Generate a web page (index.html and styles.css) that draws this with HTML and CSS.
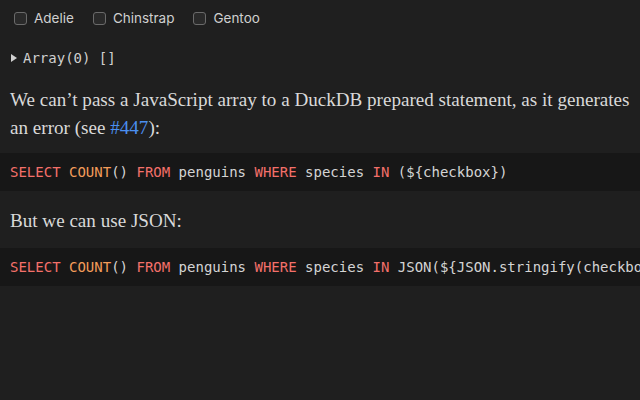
FILE: index.html
```html
<!DOCTYPE html>
<html>
<head>
<meta charset="utf-8">
<link rel="stylesheet" href="styles.css">
</head>
<body>
<main class="page">
  <form class="inputs">
    <label class="opt"><span class="box"></span>Adelie</label>
    <label class="opt"><span class="box"></span>Chinstrap</label>
    <label class="opt"><span class="box"></span>Gentoo</label>
  </form>
  <div class="inspect"><span class="caret"></span>Array(0) []</div>
  <p class="para">We can’t pass a JavaScript array to a DuckDB prepared statement, as it generates an error (see <a class="link" href="#">#447</a>):</p>
  <pre class="code"><span class="kw">SELECT</span> <span class="fn">COUNT</span>() <span class="kw">FROM</span> penguins <span class="kw">WHERE</span> species <span class="kw">IN</span> (${checkbox})</pre>
  <p class="para">But we can use JSON:</p>
  <pre class="code"><span class="kw">SELECT</span> <span class="fn">COUNT</span>() <span class="kw">FROM</span> penguins <span class="kw">WHERE</span> species <span class="kw">IN</span> JSON(${JSON.stringify(checkbox)})</pre>
</main>
</body>
</html>
```
FILE: styles.css
```css
html, body {
  margin: 0;
  padding: 0;
  background: #1f1f1f;
  color: #d9d9d9;
  height: 100%;
  overflow: hidden;
}
.page {
  padding: 0 0 0 10px;
}
.inputs {
  display: flex;
  gap: 19px;
  height: 36px;
  align-items: center;
  font-family: Inter, "Noto Sans", sans-serif;
  font-size: 13.5px;
  color: #d0d0d0;
  margin: 0 0 0 4px;
}
.opt {
  display: flex;
  align-items: center;
  gap: 7px;
}
.box {
  width: 11px;
  height: 11px;
  border: 1px solid #6a6a6a;
  border-radius: 3px;
  background: #2a2a2a;
}
.inspect {
  margin-top: 12px;
  height: 20px;
  display: flex;
  align-items: center;
  font-family: "DejaVu Sans Mono", monospace;
  font-size: 14px;
  color: #d0d0d0;
}
.caret {
  width: 0;
  height: 0;
  border-left: 6px solid #d0d0d0;
  border-top: 4px solid transparent;
  border-bottom: 4px solid transparent;
  margin: 0 6px 0 1px;
}
.para {
  font-family: "Liberation Serif", serif;
  font-size: 19.1px;
  line-height: 28px;
  margin: 18px 0 11px;
  color: #d9d9d9;
}
.code + .para {
  margin-top: 16px;
  margin-bottom: 13px;
}
.link {
  color: #4b8ff0;
  text-decoration: none;
}
.code {
  margin: 0 0 0 -10px;
  padding: 8px 10px;
  background: #171717;
  font-family: "DejaVu Sans Mono", monospace;
  font-size: 14px;
  line-height: 22px;
  color: #d4d4d4;
  white-space: pre;
  overflow: hidden;
}
.kw { color: #f4706a; }
.fn { color: #f39c5a; }
```
